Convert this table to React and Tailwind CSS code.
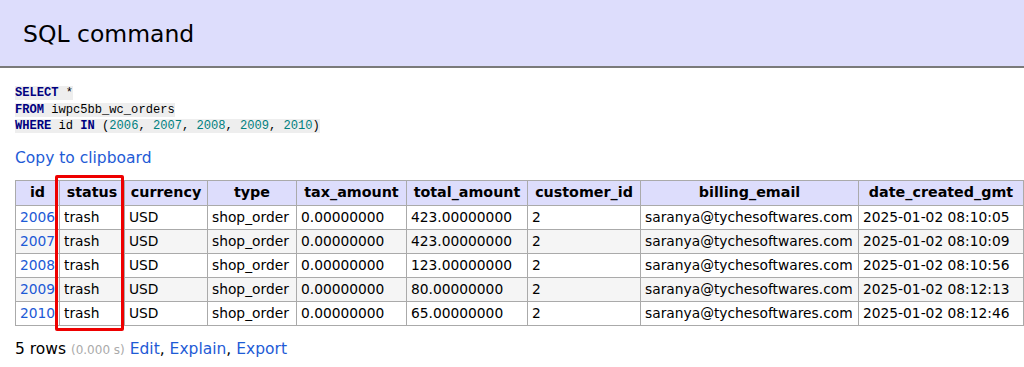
import React from "react";

const rows = [
  ["2006", "423.00000000", "2025-01-02 08:10:05"],
  ["2007", "423.00000000", "2025-01-02 08:10:09"],
  ["2008", "123.00000000", "2025-01-02 08:10:56"],
  ["2009", "80.00000000", "2025-01-02 08:12:13"],
  ["2010", "65.00000000", "2025-01-02 08:12:46"],
];

const cols = [
  ["id", "w-[44px]"],
  ["status", "w-[65px]"],
  ["currency", "w-[83px]"],
  ["type", "w-[89px]"],
  ["tax_amount", "w-[110px]"],
  ["total_amount", "w-[121px]"],
  ["customer_id", "w-[113px]"],
  ["billing_email", "w-[218px]"],
  ["date_created_gmt", "w-[165px]"],
];

export default function App() {
  return (
    <div className="w-[1024px] h-[367px] bg-white overflow-hidden text-black font-['DejaVu_Sans',sans-serif] text-[13.8px]">
      <div className="h-[68px] bg-[#ddddfc] border-b-2 border-[#7a7a7a] flex items-center pl-[23px]">
        <h2 className="text-[23.5px] font-normal leading-none mt-[4px]">SQL command</h2>
      </div>
      <div className="pl-[15px] pt-[17px]">
        <pre className="font-['Liberation_Mono',monospace] text-[12.1px] leading-[16.5px] m-0">
          <code>
            <span className="bg-[#eeeeee]"><b className="text-[#000080]">SELECT</b> *</span>{"\n"}
            <span className="bg-[#eeeeee]"><b className="text-[#000080]">FROM</b> iwpc5bb_wc_orders</span>{"\n"}
            <span className="bg-[#eeeeee]"><b className="text-[#000080]">WHERE</b> id <b className="text-[#000080]">IN</b> (<span className="text-[#008080]">2006</span>, <span className="text-[#008080]">2007</span>, <span className="text-[#008080]">2008</span>, <span className="text-[#008080]">2009</span>, <span className="text-[#008080]">2010</span>)</span>
          </code>
        </pre>
        <div className="mt-[14px] text-[#1e5bd6] text-[15.5px] leading-[18px]">Copy to clipboard</div>
        <div className="relative mt-[13px]">
          <table className="border-collapse table-fixed w-[1009px] border border-[#aaaaaa]">
            <thead>
              <tr className="bg-[#ddddfc] h-[25px]">
                {cols.map(([c, w]) => (
                  <th key={c} className={`${w} border border-[#aaaaaa] font-bold text-[14.3px] text-center px-[3px] py-0 leading-[23px] whitespace-nowrap`}>
                    {c}
                  </th>
                ))}
              </tr>
            </thead>
            <tbody>
              {rows.map(([id, total, date], i) => (
                <tr key={id} className={i % 2 === 1 ? "bg-[#f5f5f5] h-[24px]" : "bg-white h-[24px]"}>
                  <td className="border border-[#aaaaaa] px-[4px] py-0 leading-[22px] text-[#1e5bd6] whitespace-nowrap overflow-hidden">{id}</td>
                  <td className="border border-[#aaaaaa] px-[4px] py-0 leading-[22px]">trash</td>
                  <td className="border border-[#aaaaaa] px-[4px] py-0 leading-[22px]">USD</td>
                  <td className="border border-[#aaaaaa] px-[4px] py-0 leading-[22px]">shop_order</td>
                  <td className="border border-[#aaaaaa] px-[4px] py-0 leading-[22px]">0.00000000</td>
                  <td className="border border-[#aaaaaa] px-[4px] py-0 leading-[22px]">{total}</td>
                  <td className="border border-[#aaaaaa] px-[4px] py-0 leading-[22px]">2</td>
                  <td className="border border-[#aaaaaa] px-[4px] py-0 leading-[22px] whitespace-nowrap">saranya@tychesoftwares.com</td>
                  <td className="border border-[#aaaaaa] px-[4px] py-0 leading-[22px] whitespace-nowrap">{date}</td>
                </tr>
              ))}
            </tbody>
          </table>
          <div className="absolute left-[40px] top-[-5px] w-[69px] h-[156px] border-[3px] border-[#ee0000] rounded-[2px]"></div>
        </div>
        <div className="mt-[14px] text-[15.5px] leading-[18px]">
          5 rows <span className="text-[12px] text-[#aaaaaa]">(0.000 s)</span>{" "}
          <span className="text-[#1e5bd6]">Edit</span>, <span className="text-[#1e5bd6]">Explain</span>, <span className="text-[#1e5bd6]">Export</span>
        </div>
      </div>
    </div>
  );
}
